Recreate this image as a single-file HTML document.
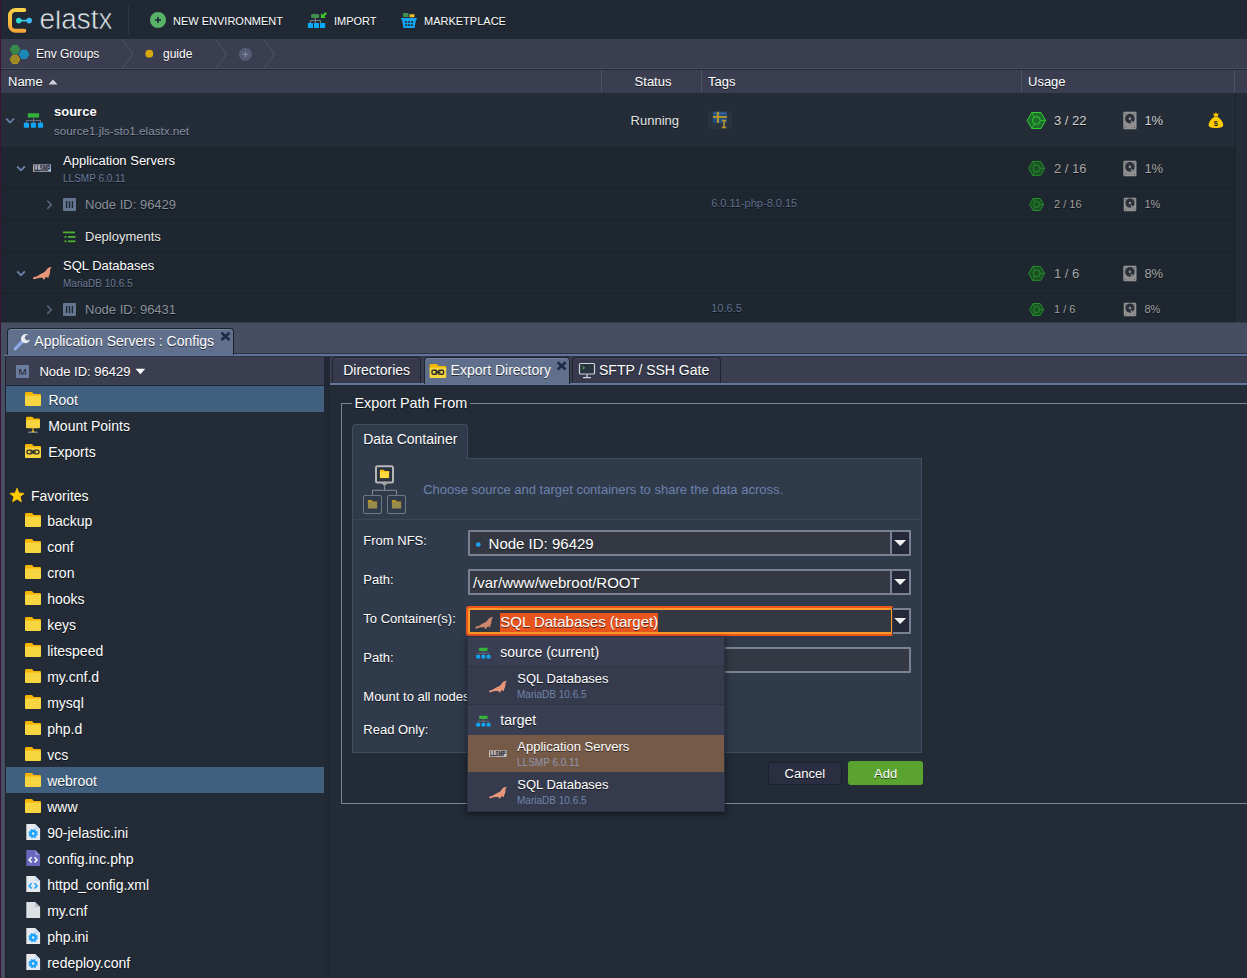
<!DOCTYPE html>
<html lang="en">
<head>
<meta charset="utf-8">
<title>elastx</title>
<style>
*{box-sizing:border-box;margin:0;padding:0}
html,body{width:1247px;height:978px;overflow:hidden;background:#222b36}
body{font-family:"Liberation Sans",Arial,sans-serif;color:#fff;position:relative;font-size:13px}
.abs{position:absolute}
svg{display:block;position:absolute;overflow:visible}
.t{position:absolute;white-space:nowrap;line-height:1}
.sh{text-shadow:0 1px 0 rgba(0,0,0,.6)}
#top{left:0;top:0;width:1247px;height:39px;background:#1f2833}
#edge{left:0;top:0;width:1px;height:978px;background:#3b1337}
#crumb{left:1px;top:39px;width:1246px;height:30px;background:#3b3e50;border-bottom:1px solid #4a4e61}
#hdr{left:1px;top:70px;width:1246px;height:23px;background:#3b3e50}
.tb{font-size:11px;color:#fff;top:16px}
.row{position:absolute;left:1px}
.sep{position:absolute;left:1px;height:1px;background:#1a2129}
</style>
</head>
<body>
<div class="abs" id="top"></div>
<div class="abs" id="crumb"></div>
<div class="abs" id="hdr"></div>

<svg style="left:0;top:0" width="130" height="39" viewBox="0 0 130 39">
  <defs><linearGradient id="lg" x1="0" y1="0" x2="0" y2="1"><stop offset="0" stop-color="#fbd04a"/><stop offset="1" stop-color="#f6a53a"/></linearGradient>
  <clipPath id="lc"><rect x="30" y="10.8" width="100" height="25"/></clipPath></defs>
  <path d="M24.3 10 H15.5 A5.5 5.5 0 0 0 10 15.5 V25.3 A5.5 5.5 0 0 0 15.5 30.8 H24.3" fill="none" stroke="url(#lg)" stroke-width="4" stroke-linecap="round"/>
  <rect x="19" y="19.8" width="10" height="1.7" fill="#35c8e0"/>
  <circle cx="18.8" cy="20.6" r="2.8" fill="#2fd6cf"/><circle cx="29.2" cy="20.6" r="2.8" fill="#3db9f0"/>
  <text clip-path="url(#lc)" x="39.5" y="28.6" font-family="Liberation Sans, sans-serif" font-size="29" fill="#dfe9ec" stroke="#1f2833" stroke-width=".6" textLength="73" lengthAdjust="spacingAndGlyphs">elastx</text>
  <rect x="128" y="5" width="1" height="30" fill="#2a3440"/>
</svg>
<svg style="left:149px;top:11px" width="18" height="18" viewBox="0 0 18 18"><circle cx="9" cy="9" r="8" fill="#58b368"/><path d="M9 6v6M6 9h6" stroke="#1f2833" stroke-width="1.6"/></svg>
<div class="t tb sh" style="left:173px">NEW ENVIRONMENT</div>
<svg style="left:307px;top:11px" width="21" height="18" viewBox="0 0 21 18">
  <rect x="4" y="2.9" width="8.3" height="4.1" rx="1.6" fill="#3f8f4f"/>
  <path d="M8.3 7v2.6M3.3 12v-2.4h10.2v2.4M8.3 9.6v2.4" stroke="#7b8594" stroke-width="1" fill="none"/>
  <rect x="0.8" y="11.9" width="5.2" height="5" rx=".5" fill="#06a9fb"/><rect x="6.9" y="11.9" width="5.1" height="5" rx=".5" fill="#06a9fb"/><rect x="13" y="11.9" width="5.2" height="5" rx=".5" fill="#06a9fb"/>
  <path d="M13.9 7 V2 L15.6 3.7 L18.4 .9 L20.1 2.6 L17.3 5.4 L18.9 7 Z" fill="#3fc52e"/>
</svg>
<div class="t tb sh" style="left:334px">IMPORT</div>
<svg style="left:400px;top:12px" width="18" height="17" viewBox="0 0 18 17">
  <rect x="3" y="1" width="5.5" height="4" rx=".5" fill="#3f8f4f"/><rect x="9.5" y="2.2" width="5" height="3" rx=".4" fill="#e9c22a"/>
  <path d="M1 6h16v1.6h-1l-1.4 8.4H3.4L2 7.6H1z" fill="#12a5f4"/>
  <g fill="#1f2833"><rect x="5" y="9" width="1.8" height="1.8"/><rect x="8.1" y="9" width="1.8" height="1.8"/><rect x="11.2" y="9" width="1.8" height="1.8"/><rect x="5.3" y="12.2" width="1.8" height="1.8"/><rect x="8.1" y="12.2" width="1.8" height="1.8"/><rect x="10.9" y="12.2" width="1.8" height="1.8"/></g>
</svg>
<div class="t tb sh" style="left:424px">MARKETPLACE</div>
<svg style="left:0;top:39px" width="300" height="30" viewBox="0 0 300 30">
  <g stroke-width=".8">
  <polygon points="19.8,10.5 17.4,14.7 12.6,14.7 10.2,10.5 12.6,6.3 17.4,6.3" fill="#3a874c" stroke="#2f9a4a"/>
  <polygon points="28.8,15.4 26.4,19.6 21.6,19.6 19.2,15.4 21.6,11.2 26.4,11.2" fill="#1c86b4" stroke="#1b9bd6"/>
  <polygon points="19.8,20.4 17.4,24.6 12.6,24.6 10.2,20.4 12.6,16.2 17.4,16.2" fill="#9c8724" stroke="#c9a318"/>
  </g>
  <path d="M122 0 L133 15 L122 30 M215.5 0 L226.5 15 L215.5 30 M263.5 0 L274.5 15 L263.5 30" stroke="#4f5468" stroke-width="1" fill="none"/>
  <circle cx="149.3" cy="14.7" r="3.9" fill="#d9a80f"/>
  <circle cx="245.4" cy="15.3" r="6.5" fill="#545b72"/>
  <path d="M245.4 12.5v5.6M242.6 15.3h5.6" stroke="#8a91a5" stroke-width="1"/>
</svg>
<div class="t sh" style="left:36px;top:48px;font-size:12px">Env Groups</div>
<div class="t sh" style="left:163px;top:48px;font-size:12px">guide</div>
<div class="t sh" style="left:8px;top:75px;font-size:13px">Name</div>
<svg style="left:48px;top:79px" width="10" height="6"><polygon points="0.5,5.5 5,0.5 9.5,5.5" fill="#cfd2da"/></svg>
<div class="t sh" style="left:634.6px;top:75px;font-size:13px">Status</div>
<div class="t sh" style="left:708px;top:75px;font-size:13px">Tags</div>
<div class="t sh" style="left:1028px;top:75px;font-size:13px">Usage</div>
<div class="abs" style="left:601px;top:70px;width:1px;height:23px;background:#4e5265;"></div><div class="abs" style="left:701px;top:70px;width:1px;height:23px;background:#4e5265;"></div><div class="abs" style="left:1021px;top:70px;width:1px;height:23px;background:#4e5265;"></div><div class="abs" style="left:1234px;top:70px;width:1px;height:23px;background:#4e5265;"></div>
<div class="row" style="top:93px;height:54px;background:#232c37;width:1234px"></div>
<div class="row" style="top:147px;height:175px;background:#1e262f;width:1234px"></div>
<div class="abs" style="left:1235px;top:93px;width:12px;height:229px;background:#232c37;"></div>
<div class="abs" style="left:1235px;top:93px;width:1px;height:229px;background:#1d232b;"></div>
<div class="sep" style="top:188px;width:1234px"></div>
<div class="sep" style="top:220px;width:1234px"></div>
<div class="sep" style="top:252px;width:1234px"></div>
<div class="sep" style="top:293px;width:1234px"></div>
<div class="t sh" style="left:54px;top:105px;font-size:13px;color:#fff;font-weight:bold;">source</div>
<div class="t sh" style="left:54px;top:125px;font-size:11.7px;color:#8791a6;">source1.jls-sto1.elastx.net</div>
<div class="t sh" style="left:630.6px;top:114px;font-size:13px;color:#e4e4e4;">Running</div>
<div class="t sh" style="left:63px;top:154px;font-size:13px;color:#fff;">Application Servers</div>
<div class="t sh" style="left:63px;top:173px;font-size:11px;color:#6a7c9c;transform:scaleX(.91);transform-origin:0 0;">LLSMP 6.0.11</div>
<div class="t sh" style="left:85px;top:198px;font-size:13px;color:#8a929e;">Node ID: 96429</div>
<div class="t sh" style="left:711.2px;top:198px;font-size:11px;color:#5f7090;">6.0.11-php-8.0.15</div>
<div class="t sh" style="left:85px;top:229.5px;font-size:13px;color:#e6e6e6;">Deployments</div>
<div class="t sh" style="left:63px;top:259px;font-size:13px;color:#fff;">SQL Databases</div>
<div class="t sh" style="left:63px;top:278px;font-size:11px;color:#6a7c9c;transform:scaleX(.91);transform-origin:0 0;">MariaDB 10.6.5</div>
<div class="t sh" style="left:85px;top:303px;font-size:13px;color:#8a929e;">Node ID: 96431</div>
<div class="t sh" style="left:711.2px;top:303px;font-size:11px;color:#5f7090;">10.6.5</div>
<div class="t sh" style="left:1054px;top:114.3px;font-size:13px;color:#d2d2d2;">3 / 22</div>
<div class="t sh" style="left:1144.4px;top:114.3px;font-size:13px;color:#d2d2d2;">1%</div>
<div class="t sh" style="left:1054px;top:162px;font-size:13px;color:#a8a8a8;">2 / 16</div>
<div class="t sh" style="left:1144.4px;top:162px;font-size:13px;color:#a8a8a8;">1%</div>
<div class="t sh" style="left:1054px;top:198.5px;font-size:11px;color:#a0a0a0;">2 / 16</div>
<div class="t sh" style="left:1144.4px;top:198.5px;font-size:11px;color:#a0a0a0;">1%</div>
<div class="t sh" style="left:1054px;top:267px;font-size:13px;color:#a8a8a8;">1 / 6</div>
<div class="t sh" style="left:1144.4px;top:267px;font-size:13px;color:#a8a8a8;">8%</div>
<div class="t sh" style="left:1054px;top:303.5px;font-size:11px;color:#a0a0a0;">1 / 6</div>
<div class="t sh" style="left:1144.4px;top:303.5px;font-size:11px;color:#a0a0a0;">8%</div>
<svg style="left:0;top:0" width="1247" height="322" viewBox="0 0 1247 322"><path d="M6.25 118.7 l3.85 3.85 l3.85 -3.85" fill="none" stroke="#6b82ab" stroke-width="1.8"/>
<g transform="translate(23.8 113.2) scale(1.0)"><rect x="4" y="0" width="11.3" height="4.4" rx=".5" fill="#36b13a"/><path d="M9.65 4.4v3M2.6 10V7.4h14.1V10M9.65 7.4V10" stroke="#6b7686" stroke-width="1" fill="none"/><rect x="0" y="9.6" width="5.2" height="4.9" rx=".6" fill="#0fa6f5"/><rect x="7.05" y="9.6" width="5.2" height="4.9" rx=".6" fill="#0fa6f5"/><rect x="14.1" y="9.6" width="5.2" height="4.9" rx=".6" fill="#0fa6f5"/></g>
<path d="M17.150000000000002 166.5 l3.85 3.85 l3.85 -3.85" fill="none" stroke="#6b82ab" stroke-width="1.8"/>
<rect x="33" y="164.4" width="18" height="7.4" fill="#b4b8c6"/><text x="33.9" y="170.9" font-family="Liberation Sans, sans-serif" font-weight="bold" font-size="8.5" stroke="#262c3a" stroke-width=".3" textLength="16.2" lengthAdjust="spacingAndGlyphs" fill="#262c3a">LLSMP</text>
<path d="M47.3 200.7 l4 4.1 l-4 4.1" fill="none" stroke="#56657f" stroke-width="1.6"/>
<rect x="63" y="198" width="13" height="13" rx=".8" fill="#63758f"/><path d="M66.6 201v7M69.5 201v7M72.4 201v7" stroke="#1e262f" stroke-width="1.3"/>
<g fill="#4db12f"><rect x="63" y="231.5" width="12" height="1.8"/><rect x="64.5" y="236" width="2" height="1.8"/><rect x="68" y="236" width="7.5" height="1.8"/><rect x="64.5" y="240.4" width="2" height="1.8"/><rect x="68" y="240.4" width="7.5" height="1.8"/></g>
<path d="M17.150000000000002 271.3 l3.85 3.85 l3.85 -3.85" fill="none" stroke="#6b82ab" stroke-width="1.8"/>
<path transform="translate(32.8 266.8) scale(1.0)" d="M.2 11.2 L1.2 10.2 C3 10 4.4 9.4 5.8 8.4 C7.6 7.2 9.6 6.6 11 5.8 C12.4 5 13.2 3.4 14.2 2.2 C15.2 1 16.8 .2 18.9 .2 C18.7 1 18 1.4 17.6 2.2 C17.2 3.2 17.4 4.6 17.2 5.8 C17 7.2 16.6 8.4 15.8 9.4 L15.9 10.8 C15.8 11.4 15 11.4 14.7 10.9 L14.2 10 C13.6 10.4 13.2 10.6 12.6 10.8 L11.9 12.3 C11.6 12.9 10.2 12.9 10.2 12.1 L10.4 11.2 C8.8 11 7.4 10.9 6 11.1 C4.6 11.3 3.2 12 2 12.3 C1.2 12.5 .2 12.4 .2 11.8 Z" fill="#e8967a"/>
<path d="M47.3 305.7 l4 4.1 l-4 4.1" fill="none" stroke="#56657f" stroke-width="1.6"/>
<rect x="63" y="303" width="13" height="13" rx=".8" fill="#63758f"/><path d="M66.6 306v7M69.5 306v7M72.4 306v7" stroke="#1e262f" stroke-width="1.3"/>
<polygon points="1045.6,120.5 1041.0,128.5 1031.8,128.5 1027.2,120.5 1031.8,112.5 1041.0,112.5" fill="#1f6e2c" stroke="#30cc30" stroke-width="1"/><path d="M1040.3 120.5 L1045.6 120.5M1034.4 123.9 L1031.8 128.5M1034.4 117.1 L1031.8 112.5" stroke="#30cc30" stroke-width=".8" fill="none"/><circle cx="1036.4" cy="120.5" r="3.9" fill="#1f6e2c" stroke="#30cc30" stroke-width="1"/>
<rect x="1123.6" y="112" width="12.6" height="17" rx=".8" fill="#8f8f8f" stroke="#a2a2a2" stroke-width=".5"/><circle cx="1129.8999999999999" cy="118.63" r="4.8" fill="#2a313b"/><circle cx="1129.8999999999999" cy="118.63" r="1.3" fill="#8f8f8f"/><path d="M1131.1 121.0 L1133.5 124.6" stroke="#8f8f8f" stroke-width="1.5"/><circle cx="1125.1999999999998" cy="127.3" r=".6" fill="#555"/><circle cx="1134.6" cy="127.3" r=".6" fill="#555"/><circle cx="1125.1999999999998" cy="113.7" r=".6" fill="#555"/><circle cx="1134.6" cy="113.7" r=".6" fill="#555"/>
<polygon points="1044.6,168.4 1040.6,175.4 1032.6,175.4 1028.6,168.4 1032.6,161.4 1040.6,161.4" fill="#1a5223" stroke="#258f2d" stroke-width="1"/><path d="M1040.0 168.4 L1044.6 168.4M1034.9 171.4 L1032.6 175.4M1034.9 165.4 L1032.6 161.4" stroke="#258f2d" stroke-width=".8" fill="none"/><circle cx="1036.6" cy="168.4" r="3.5" fill="#1a5223" stroke="#258f2d" stroke-width="1"/>
<rect x="1123.6" y="161" width="12.6" height="15" rx=".8" fill="#8f8f8f" stroke="#a2a2a2" stroke-width=".5"/><circle cx="1129.8999999999999" cy="166.85" r="4.8" fill="#2a313b"/><circle cx="1129.8999999999999" cy="166.85" r="1.3" fill="#8f8f8f"/><path d="M1131.1 169.2 L1133.5 172.8" stroke="#8f8f8f" stroke-width="1.5"/><circle cx="1125.1999999999998" cy="174.3" r=".6" fill="#555"/><circle cx="1134.6" cy="174.3" r=".6" fill="#555"/><circle cx="1125.1999999999998" cy="162.7" r=".6" fill="#555"/><circle cx="1134.6" cy="162.7" r=".6" fill="#555"/>
<polygon points="1043.6,204.5 1040.1,210.5 1033.1,210.5 1029.6,204.5 1033.1,198.5 1040.1,198.5" fill="#1a5223" stroke="#258f2d" stroke-width="1"/><path d="M1039.6 204.5 L1043.6 204.5M1035.1 207.1 L1033.1 210.5M1035.1 201.9 L1033.1 198.5" stroke="#258f2d" stroke-width=".8" fill="none"/><circle cx="1036.6" cy="204.5" r="3.0" fill="#1a5223" stroke="#258f2d" stroke-width="1"/>
<rect x="1124" y="198" width="12" height="13" rx=".8" fill="#8f8f8f" stroke="#a2a2a2" stroke-width=".5"/><circle cx="1130.0" cy="203.07" r="4.6" fill="#2a313b"/><circle cx="1130.0" cy="203.07" r="1.3" fill="#8f8f8f"/><path d="M1131.1 205.3 L1133.4 208.8" stroke="#8f8f8f" stroke-width="1.5"/><circle cx="1125.6" cy="209.3" r=".6" fill="#555"/><circle cx="1134.4" cy="209.3" r=".6" fill="#555"/><circle cx="1125.6" cy="199.7" r=".6" fill="#555"/><circle cx="1134.4" cy="199.7" r=".6" fill="#555"/>
<polygon points="1044.6,273.4 1040.6,280.4 1032.6,280.4 1028.6,273.4 1032.6,266.4 1040.6,266.4" fill="#1a5223" stroke="#258f2d" stroke-width="1"/><path d="M1040.0 273.4 L1044.6 273.4M1034.9 276.4 L1032.6 280.4M1034.9 270.4 L1032.6 266.4" stroke="#258f2d" stroke-width=".8" fill="none"/><circle cx="1036.6" cy="273.4" r="3.5" fill="#1a5223" stroke="#258f2d" stroke-width="1"/>
<rect x="1123.6" y="266" width="12.6" height="15" rx=".8" fill="#8f8f8f" stroke="#a2a2a2" stroke-width=".5"/><circle cx="1129.8999999999999" cy="271.85" r="4.8" fill="#2a313b"/><circle cx="1129.8999999999999" cy="271.85" r="1.3" fill="#8f8f8f"/><path d="M1131.1 274.2 L1133.5 277.8" stroke="#8f8f8f" stroke-width="1.5"/><circle cx="1125.1999999999998" cy="279.3" r=".6" fill="#555"/><circle cx="1134.6" cy="279.3" r=".6" fill="#555"/><circle cx="1125.1999999999998" cy="267.7" r=".6" fill="#555"/><circle cx="1134.6" cy="267.7" r=".6" fill="#555"/>
<polygon points="1043.6,309.5 1040.1,315.5 1033.1,315.5 1029.6,309.5 1033.1,303.5 1040.1,303.5" fill="#1a5223" stroke="#258f2d" stroke-width="1"/><path d="M1039.6 309.5 L1043.6 309.5M1035.1 312.1 L1033.1 315.5M1035.1 306.9 L1033.1 303.5" stroke="#258f2d" stroke-width=".8" fill="none"/><circle cx="1036.6" cy="309.5" r="3.0" fill="#1a5223" stroke="#258f2d" stroke-width="1"/>
<rect x="1124" y="303" width="12" height="13" rx=".8" fill="#8f8f8f" stroke="#a2a2a2" stroke-width=".5"/><circle cx="1130.0" cy="308.07" r="4.6" fill="#2a313b"/><circle cx="1130.0" cy="308.07" r="1.3" fill="#8f8f8f"/><path d="M1131.1 310.3 L1133.4 313.8" stroke="#8f8f8f" stroke-width="1.5"/><circle cx="1125.6" cy="314.3" r=".6" fill="#555"/><circle cx="1134.4" cy="314.3" r=".6" fill="#555"/><circle cx="1125.6" cy="304.7" r=".6" fill="#555"/><circle cx="1134.4" cy="304.7" r=".6" fill="#555"/>
<g transform="translate(1208.6 112)"><path d="M4.6 .8 L6 2.2 L7.3 .2 L8.6 2.2 L10 .8 L9.2 4.4 H5.4 Z" fill="#ffcc00"/><path d="M5.4 5 H9.2 C12.4 7.2 14.6 10.4 14.6 12.8 C14.6 15 12.6 16 7.3 16 C2 16 0 15 0 12.8 C0 10.4 2.2 7.2 5.4 5Z" fill="#ffcc00"/><text x="7.3" y="14" text-anchor="middle" font-family="Liberation Sans, sans-serif" font-weight="bold" font-size="7.5" fill="#2b2b2b">$</text></g>
<g transform="translate(708.2 111)"><rect width="23.6" height="18" rx="1.5" fill="#2a3441"/><rect x="4.7" y=".8" width="14.1" height="11.1" fill="#234f80"/><rect x="5.7" y="1.8" width="12" height=".9" fill="#6f8cb0" opacity=".6"/><rect x="8.7" y=".8" width="2.1" height="11.1" fill="#b3942d"/><rect x="4.7" y="5" width="14.1" height="1.9" fill="#b3942d"/><path d="M13.7 9.4h4.3M15.85 9.4v7.2M13.7 16.6h4.3" stroke="#b8982c" stroke-width="1.5"/></g></svg>
<div class="abs" style="left:1px;top:322px;width:1246px;height:32px;background:#464f62;border-top:1px solid #343b4a"></div>
<div class="abs" style="left:5px;top:353.4px;width:1242px;height:3.6px;background:#2c3342;"></div>
<div class="abs" style="left:5px;top:354px;width:1242px;height:2.4px;background:#61739a;"></div>
<div class="abs" style="left:7px;top:328px;width:227px;height:27px;background:#5f6f8c;border:1px solid #1c2430;border-bottom:none;border-radius:4px 4px 0 0;box-shadow:inset 0 1px 0 #7485a3"></div>
<div class="t sh" style="left:34.3px;top:334px;font-size:14px;color:#fff;">Application Servers : Configs</div>
<div class="abs" style="left:1px;top:354px;width:4px;height:624px;background:#464f62;"></div>
<div class="abs" style="left:5px;top:357px;width:320px;height:621px;background:#1c2430;"></div>
<div class="abs" style="left:6px;top:357px;width:318px;height:28px;background:#3b3e50;"></div>
<div class="abs" style="left:6px;top:386px;width:318px;height:592px;background:#222b36;"></div>
<div class="abs" style="left:6px;top:386px;width:318px;height:26px;background:#41607f;"></div>
<div class="abs" style="left:6px;top:767px;width:318px;height:26px;background:#41607f;"></div>
<div class="abs" style="left:324px;top:357px;width:6px;height:621px;background:#202834;"></div>
<div class="abs" style="left:16px;top:365px;width:13px;height:13px;background:#6a7d9e;"></div>
<div class="t" style="left:18.4px;top:367.2px;font-size:9.7px;color:#1a212b;">M</div>
<div class="t sh" style="left:39.4px;top:365px;font-size:13px;color:#fff;">Node ID: 96429</div>
<div class="t sh" style="left:48.4px;top:393px;font-size:14px;color:#fff;">Root</div>
<div class="t sh" style="left:48.2px;top:419px;font-size:14px;color:#fff;">Mount Points</div>
<div class="t sh" style="left:48.2px;top:445px;font-size:14px;color:#fff;">Exports</div>
<div class="t sh" style="left:31px;top:489px;font-size:14px;color:#fff;">Favorites</div>
<div class="t sh" style="left:47.2px;top:514px;font-size:14px;color:#fff;">backup</div>
<div class="t sh" style="left:47.2px;top:540px;font-size:14px;color:#fff;">conf</div>
<div class="t sh" style="left:47.2px;top:566px;font-size:14px;color:#fff;">cron</div>
<div class="t sh" style="left:47.2px;top:592px;font-size:14px;color:#fff;">hooks</div>
<div class="t sh" style="left:47.2px;top:618px;font-size:14px;color:#fff;">keys</div>
<div class="t sh" style="left:47.2px;top:644px;font-size:14px;color:#fff;">litespeed</div>
<div class="t sh" style="left:47.2px;top:670px;font-size:14px;color:#fff;">my.cnf.d</div>
<div class="t sh" style="left:47.2px;top:696px;font-size:14px;color:#fff;">mysql</div>
<div class="t sh" style="left:47.2px;top:722px;font-size:14px;color:#fff;">php.d</div>
<div class="t sh" style="left:47.2px;top:748px;font-size:14px;color:#fff;">vcs</div>
<div class="t sh" style="left:47.2px;top:774px;font-size:14px;color:#fff;">webroot</div>
<div class="t sh" style="left:47.2px;top:800px;font-size:14px;color:#fff;">www</div>
<div class="t sh" style="left:47.2px;top:826px;font-size:14px;color:#fff;">90-jelastic.ini</div>
<div class="t sh" style="left:47.2px;top:852px;font-size:14px;color:#fff;">config.inc.php</div>
<div class="t sh" style="left:47.2px;top:878px;font-size:14px;color:#fff;">httpd_config.xml</div>
<div class="t sh" style="left:47.2px;top:904px;font-size:14px;color:#fff;">my.cnf</div>
<div class="t sh" style="left:47.2px;top:930px;font-size:14px;color:#fff;">php.ini</div>
<div class="t sh" style="left:47.2px;top:956px;font-size:14px;color:#fff;">redeploy.conf</div>
<div class="abs" style="left:330px;top:357px;width:917px;height:26px;background:#3b3e50;"></div>
<div class="abs" style="left:330px;top:382.5px;width:917px;height:3px;background:#64769a;"></div>
<div class="abs" style="left:330px;top:385.3px;width:917px;height:593px;background:#222b36;"></div>
<div class="abs" style="left:332px;top:357px;width:89px;height:26px;background:#363a4c;border:1px solid #1c2430;border-bottom:none;border-radius:4px 4px 0 0;box-shadow:inset 0 1px 0 #474c60"></div>
<div class="t sh" style="left:343.2px;top:363px;font-size:14px;color:#fff;">Directories</div>
<div class="abs" style="left:423.5px;top:357px;width:146px;height:26.5px;background:#5f6f8c;border:1px solid #1c2430;border-bottom:none;border-radius:4px 4px 0 0;box-shadow:inset 0 1px 0 #7485a3"></div>
<div class="t sh" style="left:450.6px;top:363px;font-size:14px;color:#fff;">Export Directory</div>
<div class="abs" style="left:572.3px;top:357px;width:148.7px;height:26px;background:#363a4c;border:1px solid #1c2430;border-bottom:none;border-radius:4px 4px 0 0;box-shadow:inset 0 1px 0 #474c60"></div>
<div class="t sh" style="left:599px;top:363px;font-size:14px;color:#fff;">SFTP / SSH Gate</div>
<svg style="left:0;top:0" width="1247" height="978" viewBox="0 0 1247 978"><path d="M221.5 332.8 l8 7.2 M229.5 332.8 l-8 7.2" stroke="#1c2c44" stroke-width="2.6"/>
<path d="M15.2 348.8 L23.5 340.5" stroke="#8eaae6" stroke-width="3.2" stroke-linecap="round"/><path d="M28.6 335.2 a4.6 4.6 0 1 0 1.4 4.6 l-3.4 .6 l-2 -2.2 l1.2 -3.2z" fill="#ececf2"/>
<polygon points="135.6,368.8 145.2,368.8 140.4,374.2" fill="#fff"/>
<path d="M25 393.2 a1.2 1.2 0 0 1 1.2 -1.2 h5.8 l1.8 1.9 h6.0 a1.2 1.2 0 0 1 1.2 1.2 v3 h-16 z" fill="#f5b400"/><rect x="25" y="395.4" width="16" height="10.6" rx="1" fill="#f7d540"/>
<path d="M26 417.9 a1.2 1.2 0 0 1 1.2 -1.2 h5.0 l1.8 1.9 h4.8 a1.2 1.2 0 0 1 1.2 1.2 v3 h-14 z" fill="#f5b400"/><rect x="26" y="420.09999999999997" width="14" height="8.1" rx="1" fill="#f7d540"/>
<path d="M28.2 432.2 h9.6" stroke="#a9adb3" stroke-width=".9"/><path d="M33 428.2 v3.2 M31.6 431.6 h2.8" stroke="#e0b020" stroke-width="1.4"/>
<path d="M25 445.2 a1.2 1.2 0 0 1 1.2 -1.2 h5.8 l1.8 1.9 h6.0 a1.2 1.2 0 0 1 1.2 1.2 v3 h-16 z" fill="#f5b400"/><rect x="25" y="447.4" width="16" height="10.6" rx="1" fill="#f7d540"/>
<g fill="none" stroke="#2b2b2b" stroke-width="1.4"><rect x="27" y="450.1" width="5.4" height="3.8" rx="1.7"/><rect x="33.6" y="450.1" width="5.4" height="3.8" rx="1.7"/><path d="M30.2 452 h5.6"/></g>
<polygon points="17.0,488.2 18.9,493.0 24.1,493.4 20.1,496.7 21.4,501.8 17.0,499.0 12.6,501.8 13.9,496.7 9.9,493.4 15.1,493.0" fill="#ffcb05" stroke="#ffcb05" stroke-width=".8" stroke-linejoin="round"/>
<path d="M25 514.2 a1.2 1.2 0 0 1 1.2 -1.2 h5.8 l1.8 1.9 h6.0 a1.2 1.2 0 0 1 1.2 1.2 v3 h-16 z" fill="#f5b400"/><rect x="25" y="516.4" width="16" height="10.6" rx="1" fill="#f7d540"/>
<path d="M25 540.2 a1.2 1.2 0 0 1 1.2 -1.2 h5.8 l1.8 1.9 h6.0 a1.2 1.2 0 0 1 1.2 1.2 v3 h-16 z" fill="#f5b400"/><rect x="25" y="542.4" width="16" height="10.6" rx="1" fill="#f7d540"/>
<path d="M25 566.2 a1.2 1.2 0 0 1 1.2 -1.2 h5.8 l1.8 1.9 h6.0 a1.2 1.2 0 0 1 1.2 1.2 v3 h-16 z" fill="#f5b400"/><rect x="25" y="568.4" width="16" height="10.6" rx="1" fill="#f7d540"/>
<path d="M25 592.2 a1.2 1.2 0 0 1 1.2 -1.2 h5.8 l1.8 1.9 h6.0 a1.2 1.2 0 0 1 1.2 1.2 v3 h-16 z" fill="#f5b400"/><rect x="25" y="594.4" width="16" height="10.6" rx="1" fill="#f7d540"/>
<path d="M25 618.2 a1.2 1.2 0 0 1 1.2 -1.2 h5.8 l1.8 1.9 h6.0 a1.2 1.2 0 0 1 1.2 1.2 v3 h-16 z" fill="#f5b400"/><rect x="25" y="620.4" width="16" height="10.6" rx="1" fill="#f7d540"/>
<path d="M25 644.2 a1.2 1.2 0 0 1 1.2 -1.2 h5.8 l1.8 1.9 h6.0 a1.2 1.2 0 0 1 1.2 1.2 v3 h-16 z" fill="#f5b400"/><rect x="25" y="646.4" width="16" height="10.6" rx="1" fill="#f7d540"/>
<path d="M25 670.2 a1.2 1.2 0 0 1 1.2 -1.2 h5.8 l1.8 1.9 h6.0 a1.2 1.2 0 0 1 1.2 1.2 v3 h-16 z" fill="#f5b400"/><rect x="25" y="672.4" width="16" height="10.6" rx="1" fill="#f7d540"/>
<path d="M25 696.2 a1.2 1.2 0 0 1 1.2 -1.2 h5.8 l1.8 1.9 h6.0 a1.2 1.2 0 0 1 1.2 1.2 v3 h-16 z" fill="#f5b400"/><rect x="25" y="698.4" width="16" height="10.6" rx="1" fill="#f7d540"/>
<path d="M25 722.2 a1.2 1.2 0 0 1 1.2 -1.2 h5.8 l1.8 1.9 h6.0 a1.2 1.2 0 0 1 1.2 1.2 v3 h-16 z" fill="#f5b400"/><rect x="25" y="724.4" width="16" height="10.6" rx="1" fill="#f7d540"/>
<path d="M25 748.2 a1.2 1.2 0 0 1 1.2 -1.2 h5.8 l1.8 1.9 h6.0 a1.2 1.2 0 0 1 1.2 1.2 v3 h-16 z" fill="#f5b400"/><rect x="25" y="750.4" width="16" height="10.6" rx="1" fill="#f7d540"/>
<path d="M25 774.2 a1.2 1.2 0 0 1 1.2 -1.2 h5.8 l1.8 1.9 h6.0 a1.2 1.2 0 0 1 1.2 1.2 v3 h-16 z" fill="#f5b400"/><rect x="25" y="776.4" width="16" height="10.6" rx="1" fill="#f7d540"/>
<path d="M25 800.2 a1.2 1.2 0 0 1 1.2 -1.2 h5.8 l1.8 1.9 h6.0 a1.2 1.2 0 0 1 1.2 1.2 v3 h-16 z" fill="#f5b400"/><rect x="25" y="802.4" width="16" height="10.6" rx="1" fill="#f7d540"/>
<path d="M26.299999999999997 824 h8.8 l5 5 v11 h-13.8 z" fill="#e6eaee"/><path d="M35.099999999999994 824 l5 5 h-5z" fill="#c3def4"/><circle cx="33.1" cy="833.6" r="3.5" fill="none" stroke="#1aa3ff" stroke-width="2.4" stroke-dasharray="1.75 1"/><circle cx="33.1" cy="833.6" r="2.4" fill="none" stroke="#1aa3ff" stroke-width="2.2"/>
<path d="M26.299999999999997 850 h8.8 l5 5 v11 h-13.8 z" fill="#6868be"/><path d="M35.099999999999994 850 l5 5 h-5z" fill="#8b89d2"/><path d="M31.700000000000003 857.3000000000001 l-2.6 2.6 l2.6 2.6 M34.5 857.3000000000001 l2.6 2.6 l-2.6 2.6" fill="none" stroke="#fff" stroke-width="1.5"/>
<path d="M26.299999999999997 876 h8.8 l5 5 v11 h-13.8 z" fill="#e6eaee"/><path d="M35.099999999999994 876 l5 5 h-5z" fill="#c3def4"/><path d="M31.700000000000003 883.3000000000001 l-2.6 2.6 l2.6 2.6 M34.5 883.3000000000001 l2.6 2.6 l-2.6 2.6" fill="none" stroke="#1aa3ff" stroke-width="1.5"/>
<path d="M26.299999999999997 902 h8.8 l5 5 v11 h-13.8 z" fill="#dde1e6"/><path d="M35.099999999999994 902 l5 5 h-5z" fill="#b4bbc4"/>
<path d="M26.299999999999997 928 h8.8 l5 5 v11 h-13.8 z" fill="#e6eaee"/><path d="M35.099999999999994 928 l5 5 h-5z" fill="#c3def4"/><circle cx="33.1" cy="937.6" r="3.5" fill="none" stroke="#1aa3ff" stroke-width="2.4" stroke-dasharray="1.75 1"/><circle cx="33.1" cy="937.6" r="2.4" fill="none" stroke="#1aa3ff" stroke-width="2.2"/>
<path d="M26.299999999999997 954 h8.8 l5 5 v11 h-13.8 z" fill="#e6eaee"/><path d="M35.099999999999994 954 l5 5 h-5z" fill="#c3def4"/><circle cx="33.1" cy="963.6" r="3.5" fill="none" stroke="#1aa3ff" stroke-width="2.4" stroke-dasharray="1.75 1"/><circle cx="33.1" cy="963.6" r="2.4" fill="none" stroke="#1aa3ff" stroke-width="2.2"/>
<path d="M429.6 365.2 a1.2 1.2 0 0 1 1.2 -1.2 h6.0 l1.8 1.9 h6.4 a1.2 1.2 0 0 1 1.2 1.2 v3 h-16.6 z" fill="#f5b400"/><rect x="429.6" y="367.4" width="16.6" height="10.6" rx="1" fill="#f7d540"/>
<g fill="none" stroke="#2b2b2b" stroke-width="1.4"><rect x="432" y="370.2" width="5" height="4" rx="1.2"/><rect x="438.6" y="370.2" width="5" height="4" rx="1.2"/><path d="M435 372.2 h5.5"/></g>
<path d="M557.6 362.3 l8 7.2 M565.6 362.3 l-8 7.2" stroke="#1c2c44" stroke-width="2.6"/>
<rect x="579.5" y="363.5" width="15" height="10.5" rx="1" fill="#2a3340" stroke="#d0d4da" stroke-width="1.2"/><path d="M582.5 366.3 l2 1.5 l-2 1.5" stroke="#57c04a" stroke-width="1" fill="none"/><path d="M587 374.5 v2.5 M583 377.6 h8" stroke="#d0d4da" stroke-width="1.3"/></svg>
<div class="abs" style="left:341px;top:403px;width:920px;height:401px;background:transparent;border:1px solid #7b8799"></div>
<div class="abs" style="left:352px;top:396px;width:118px;height:16px;background:#222b36;"></div>
<div class="t sh" style="left:354.4px;top:395.7px;font-size:14.4px;color:#fff;">Export Path From</div>
<div class="abs" style="left:352.3px;top:458px;width:569.4px;height:295px;background:#2f3a4a;border:1px solid #414e60"></div>
<div class="abs" style="left:352.3px;top:424px;width:116px;height:35px;background:#2f3a4a;border:1px solid #414e60;border-bottom:none;border-radius:4px 4px 0 0"></div>
<div class="t sh" style="left:363.2px;top:432px;font-size:14px;color:#fff;">Data Container</div>
<div class="abs" style="left:353.3px;top:519px;width:567.4px;height:1px;background:#3b4758;"></div>
<div class="t" style="left:423.2px;top:483.3px;font-size:13px;color:#6d82ad;">Choose source and target containers to share the data across.</div>
<div class="t sh" style="left:363.3px;top:534.2px;font-size:13px;color:#fff;">From NFS:</div>
<div class="t sh" style="left:363.3px;top:573px;font-size:13px;color:#fff;">Path:</div>
<div class="t sh" style="left:363.3px;top:612px;font-size:13px;color:#fff;">To Container(s):</div>
<div class="t sh" style="left:363.3px;top:651px;font-size:13px;color:#fff;">Path:</div>
<div class="t sh" style="left:363.3px;top:690px;font-size:13px;color:#fff;">Mount to all nodes:</div>
<div class="t sh" style="left:363.3px;top:723px;font-size:13px;color:#fff;">Read Only:</div>
<div class="abs" style="left:468px;top:530px;width:443px;height:26px;background:#343842;border:2px solid #7b8194;border-radius:1px"></div><div class="abs" style="left:889.5px;top:532px;width:2px;height:22px;background:#7b8194;"></div><div class="abs" style="left:891.5px;top:532px;width:17.5px;height:22px;background:#252839;"></div>
<div class="abs" style="left:468px;top:569px;width:443px;height:26px;background:#343842;border:2px solid #7b8194;border-radius:1px"></div><div class="abs" style="left:889.5px;top:571px;width:2px;height:22px;background:#7b8194;"></div><div class="abs" style="left:891.5px;top:571px;width:17.5px;height:22px;background:#252839;"></div>
<div class="abs" style="left:468px;top:608px;width:443px;height:26px;background:#343842;border:2px solid #7b8194;border-radius:1px"></div><div class="abs" style="left:889.5px;top:610px;width:2px;height:22px;background:#7b8194;"></div><div class="abs" style="left:891.5px;top:610px;width:17.5px;height:22px;background:#252839;"></div>
<div class="abs" style="left:468px;top:647px;width:443px;height:26px;background:#343842;border:2px solid #7b8194;border-radius:1px"></div>
<div class="t sh" style="left:488.6px;top:536px;font-size:15px;color:#fff;">Node ID: 96429</div>
<div class="t sh" style="left:473px;top:575.3px;font-size:15px;color:#fff;">/var/www/webroot/ROOT</div>
<div class="abs" style="left:466px;top:606px;width:426.6px;height:30px;background:#343842;border:2px solid #f0561a;border-right:none;border-radius:3px 2px 2px 3px"></div>
<div class="abs" style="left:468px;top:608px;width:424px;height:26px;background:#343842;border:2px solid #fb9a2a;border-right-width:1.6px;border-radius:1px"></div>
<div class="abs" style="left:500.3px;top:613px;width:157.9px;height:18.6px;background:#e8541e;"></div>
<div class="t sh" style="left:500.3px;top:614.3px;font-size:15px;color:#fff;">SQL Databases (target)</div>
<div class="abs" style="left:767.7px;top:761.5px;width:74px;height:23.5px;background:#2a2e40;border:1px solid #1c202c;border-radius:3px"></div>
<div class="t sh" style="left:784.6px;top:766.8px;font-size:13px;color:#fff;">Cancel</div>
<div class="abs" style="left:848px;top:761px;width:75px;height:24px;background:#5ba331;border-radius:3px"></div>
<div class="t sh" style="left:874px;top:766.8px;font-size:13px;color:#fff;">Add</div>
<div class="abs" style="left:466.8px;top:636px;width:258.2px;height:176px;background:#3a3e52;box-shadow:0 2px 6px rgba(0,0,0,.5);border:1px solid #2c3042"></div>
<div class="abs" style="left:467.8px;top:667px;width:256.2px;height:37px;background:#353a4d;"></div>
<div class="abs" style="left:467.8px;top:735px;width:256.2px;height:37.2px;background:#755a47;"></div>
<div class="abs" style="left:467.8px;top:772.5px;width:256.2px;height:38.5px;background:#353a4d;"></div>
<div class="abs" style="left:467.8px;top:666px;width:256.2px;height:1px;background:#2e3345;"></div>
<div class="abs" style="left:467.8px;top:703.5px;width:256.2px;height:1px;background:#2e3345;"></div>
<div class="t sh" style="left:500.3px;top:644.7px;font-size:14px;color:#fff;">source (current)</div>
<div class="t sh" style="left:500.3px;top:713px;font-size:14px;color:#fff;">target</div>
<div class="t sh" style="left:517.3px;top:672px;font-size:13px;color:#fff;">SQL Databases</div>
<div class="t" style="left:517.3px;top:688.5px;font-size:11px;color:#6f84a8;transform:scaleX(.91);transform-origin:0 0;">MariaDB 10.6.5</div>
<div class="t sh" style="left:517.3px;top:740px;font-size:13px;color:#fff;">Application Servers</div>
<div class="t" style="left:517.3px;top:756.5px;font-size:11px;color:#8d96ad;transform:scaleX(.91);transform-origin:0 0;">LLSMP 6.0.11</div>
<div class="t sh" style="left:517.3px;top:778px;font-size:13px;color:#fff;">SQL Databases</div>
<div class="t" style="left:517.3px;top:794.5px;font-size:11px;color:#6f84a8;transform:scaleX(.91);transform-origin:0 0;">MariaDB 10.6.5</div>
<svg style="left:0;top:0" width="1247" height="978" viewBox="0 0 1247 978"><rect x="376" y="466.2" width="17" height="16.2" rx="1.5" fill="#2a3340" stroke="#b6b6b6" stroke-width="2"/>
<path d="M379.9 469.7 h3.9 l1 1.3 h4.3 v2 h-9.2z" fill="#ffc107"/><rect x="379.9" y="471.7" width="9.2" height="6.4" fill="#ffd83b"/>
<polygon points="384.5,481 387.3,483.6 384.5,486.2 381.7,483.6" fill="#a4a4a4"/><path d="M384.5 485 v5.3 M372.5 495 v-4.7 h24 v4.7" stroke="#868c96" stroke-width="1" fill="none"/>
<rect x="363.5" y="495.5" width="18" height="18" rx="1.5" fill="none" stroke="#6f7785" stroke-width="1"/><rect x="387.5" y="495.5" width="18" height="18" rx="1.5" fill="none" stroke="#6f7785" stroke-width="1"/>
<path d="M367.9 500.1 h3.9 l1 1.3 h4.3 v2 h-9.2z" fill="#b8962a"/><rect x="367.9" y="502.1" width="9.2" height="6.4" fill="#9c8c4a"/>
<path d="M391.9 500.1 h3.9 l1 1.3 h4.3 v2 h-9.2z" fill="#b8962a"/><rect x="391.9" y="502.1" width="9.2" height="6.4" fill="#9c8c4a"/>
<polygon points="894.2,540 906.2,540 900.2,546" fill="#f0f0f0"/>
<polygon points="894.2,579 906.2,579 900.2,585" fill="#f0f0f0"/>
<polygon points="894.2,618 906.2,618 900.2,624" fill="#f0f0f0"/>
<circle cx="478.3" cy="544.6" r="2.4" fill="#1ea0f0"/>
<path transform="translate(475 616.7) scale(0.96)" d="M.2 11.2 L1.2 10.2 C3 10 4.4 9.4 5.8 8.4 C7.6 7.2 9.6 6.6 11 5.8 C12.4 5 13.2 3.4 14.2 2.2 C15.2 1 16.8 .2 18.9 .2 C18.7 1 18 1.4 17.6 2.2 C17.2 3.2 17.4 4.6 17.2 5.8 C17 7.2 16.6 8.4 15.8 9.4 L15.9 10.8 C15.8 11.4 15 11.4 14.7 10.9 L14.2 10 C13.6 10.4 13.2 10.6 12.6 10.8 L11.9 12.3 C11.6 12.9 10.2 12.9 10.2 12.1 L10.4 11.2 C8.8 11 7.4 10.9 6 11.1 C4.6 11.3 3.2 12 2 12.3 C1.2 12.5 .2 12.4 .2 11.8 Z" fill="#cc876f"/>
<g transform="translate(476.2 647.8) scale(0.74)"><rect x="4" y="0" width="11.3" height="4.4" rx=".5" fill="#36b13a"/><path d="M9.65 4.4v3M2.6 10V7.4h14.1V10M9.65 7.4V10" stroke="#6b7686" stroke-width="1" fill="none"/><rect x="0" y="9.6" width="5.2" height="4.9" rx=".6" fill="#0fa6f5"/><rect x="7.05" y="9.6" width="5.2" height="4.9" rx=".6" fill="#0fa6f5"/><rect x="14.1" y="9.6" width="5.2" height="4.9" rx=".6" fill="#0fa6f5"/></g>
<g transform="translate(476.2 715.8) scale(0.74)"><rect x="4" y="0" width="11.3" height="4.4" rx=".5" fill="#36b13a"/><path d="M9.65 4.4v3M2.6 10V7.4h14.1V10M9.65 7.4V10" stroke="#6b7686" stroke-width="1" fill="none"/><rect x="0" y="9.6" width="5.2" height="4.9" rx=".6" fill="#0fa6f5"/><rect x="7.05" y="9.6" width="5.2" height="4.9" rx=".6" fill="#0fa6f5"/><rect x="14.1" y="9.6" width="5.2" height="4.9" rx=".6" fill="#0fa6f5"/></g>
<path transform="translate(489 680.5) scale(0.95)" d="M.2 11.2 L1.2 10.2 C3 10 4.4 9.4 5.8 8.4 C7.6 7.2 9.6 6.6 11 5.8 C12.4 5 13.2 3.4 14.2 2.2 C15.2 1 16.8 .2 18.9 .2 C18.7 1 18 1.4 17.6 2.2 C17.2 3.2 17.4 4.6 17.2 5.8 C17 7.2 16.6 8.4 15.8 9.4 L15.9 10.8 C15.8 11.4 15 11.4 14.7 10.9 L14.2 10 C13.6 10.4 13.2 10.6 12.6 10.8 L11.9 12.3 C11.6 12.9 10.2 12.9 10.2 12.1 L10.4 11.2 C8.8 11 7.4 10.9 6 11.1 C4.6 11.3 3.2 12 2 12.3 C1.2 12.5 .2 12.4 .2 11.8 Z" fill="#e8967a"/>
<path transform="translate(489 786.5) scale(0.95)" d="M.2 11.2 L1.2 10.2 C3 10 4.4 9.4 5.8 8.4 C7.6 7.2 9.6 6.6 11 5.8 C12.4 5 13.2 3.4 14.2 2.2 C15.2 1 16.8 .2 18.9 .2 C18.7 1 18 1.4 17.6 2.2 C17.2 3.2 17.4 4.6 17.2 5.8 C17 7.2 16.6 8.4 15.8 9.4 L15.9 10.8 C15.8 11.4 15 11.4 14.7 10.9 L14.2 10 C13.6 10.4 13.2 10.6 12.6 10.8 L11.9 12.3 C11.6 12.9 10.2 12.9 10.2 12.1 L10.4 11.2 C8.8 11 7.4 10.9 6 11.1 C4.6 11.3 3.2 12 2 12.3 C1.2 12.5 .2 12.4 .2 11.8 Z" fill="#e8967a"/>
<rect x="489" y="750.3" width="17.6" height="6.6" fill="#c9c5c6"/><text x="489.9" y="756.0" font-family="Liberation Sans, sans-serif" font-weight="bold" font-size="7.6" stroke="#3a3038" stroke-width=".3" textLength="15.8" lengthAdjust="spacingAndGlyphs" fill="#3a3038">LLSMP</text></svg>
<div class="abs" id="edge"></div>
</body>
</html>
